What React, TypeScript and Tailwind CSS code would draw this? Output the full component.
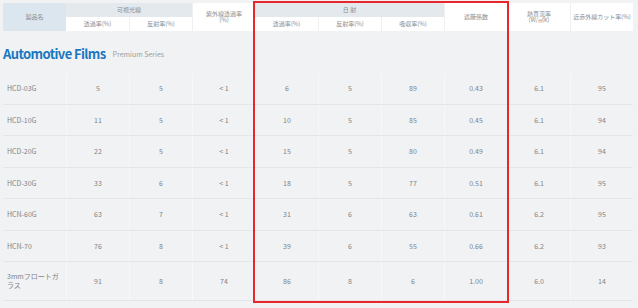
import React from "react";

const rows: string[][] = [
  ["HCD-03G", "5", "5", "< 1", "6", "5", "89", "0.43", "6.1", "95"],
  ["HCD-10G", "11", "5", "< 1", "10", "5", "85", "0.45", "6.1", "94"],
  ["HCD-20G", "22", "5", "< 1", "15", "5", "80", "0.49", "6.1", "94"],
  ["HCD-30G", "33", "6", "< 1", "18", "5", "77", "0.51", "6.1", "95"],
  ["HCN-60G", "63", "7", "< 1", "31", "6", "63", "0.61", "6.2", "95"],
  ["HCN-70", "76", "8", "< 1", "39", "6", "55", "0.66", "6.2", "93"],
];

const font = { fontFamily: '"Noto Sans CJK JP", "Noto Sans", sans-serif' };

export default function App() {
  return (
    <div
      className="relative w-[638px] h-[308px] bg-[#f1f2f4] pl-[3px] pt-[3px] overflow-hidden"
      style={font}
    >
      <div className="w-[630px]">
        {/* Header */}
        <div className="grid grid-cols-[repeat(10,63px)] grid-rows-[14px_14px] text-[6px] leading-[6px] text-[#8a8d91]">
          <div className="row-span-2 bg-[#dce6ef] flex items-center justify-center">製品名</div>
          <div className="col-span-2 bg-[#e4e9ee] flex items-center justify-center">可視光線</div>
          <div className="row-span-2 bg-white flex flex-col items-center justify-center border-l border-[#eef0f2] text-center">
            <span>紫外線透過率</span>
            <span>(%)</span>
          </div>
          <div className="col-span-3 bg-[#e4e9ee] flex items-center justify-center">日 射</div>
          <div className="row-span-2 bg-white flex items-center justify-center border-l border-[#eef0f2]">遮蔽係数</div>
          <div className="row-span-2 bg-white flex flex-col items-center justify-center border-l border-[#eef0f2] text-center">
            <span>熱貫流率</span>
            <span>(W/㎡k)</span>
          </div>
          <div className="row-span-2 bg-white flex items-center justify-center border-l border-[#eef0f2]">近赤外線カット率(%)</div>
          <div className="bg-white flex items-center justify-center">透過率(%)</div>
          <div className="bg-white flex items-center justify-center border-l border-[#eef0f2]">反射率(%)</div>
          <div className="bg-white flex items-center justify-center">透過率(%)</div>
          <div className="bg-white flex items-center justify-center border-l border-[#eef0f2]">反射率(%)</div>
          <div className="bg-white flex items-center justify-center border-l border-[#eef0f2]">吸収率(%)</div>
        </div>

        {/* Section title */}
        <div className="h-[42px] flex items-center gap-[7px] pt-[2px]">
          <span className="text-[13px] font-bold text-[#1b78bf] leading-none tracking-[-0.6px]">Automotive Films</span>
          <span className="text-[7px] text-[#9a9da1] leading-none mt-[3px]">Premium Series</span>
        </div>

        {/* Body */}
        <div className="text-[7px] text-[#808387]">
          {rows.map((r, i) => (
            <div key={i} className="grid grid-cols-[repeat(10,63px)] h-[31.5px] border-b border-[#e4e6e9]">
              {r.map((c, j) => (
                <div
                  key={j}
                  className={
                    j === 0
                      ? "flex items-center pl-[4px]"
                      : "flex items-center justify-center border-l border-[#f7f8f9]"
                  }
                >
                  {c}
                </div>
              ))}
            </div>
          ))}
          <div className="grid grid-cols-[repeat(10,63px)] h-[39px] border-b border-[#e4e6e9]">
            <div className="flex items-center pl-[4px] leading-[9px] whitespace-nowrap">
              3mmフロートガ
              <br />
              ラス
            </div>
            {["91", "8", "74", "86", "8", "6", "1.00", "6.0", "14"].map((c, j) => (
              <div key={j} className="flex items-center justify-center border-l border-[#f7f8f9]">
                {c}
              </div>
            ))}
          </div>
        </div>
      </div>

      {/* Red highlight box */}
      <div className="absolute left-[253px] top-[1px] w-[256px] h-[302px] border-2 border-[#e8262c] pointer-events-none" />
    </div>
  );
}
